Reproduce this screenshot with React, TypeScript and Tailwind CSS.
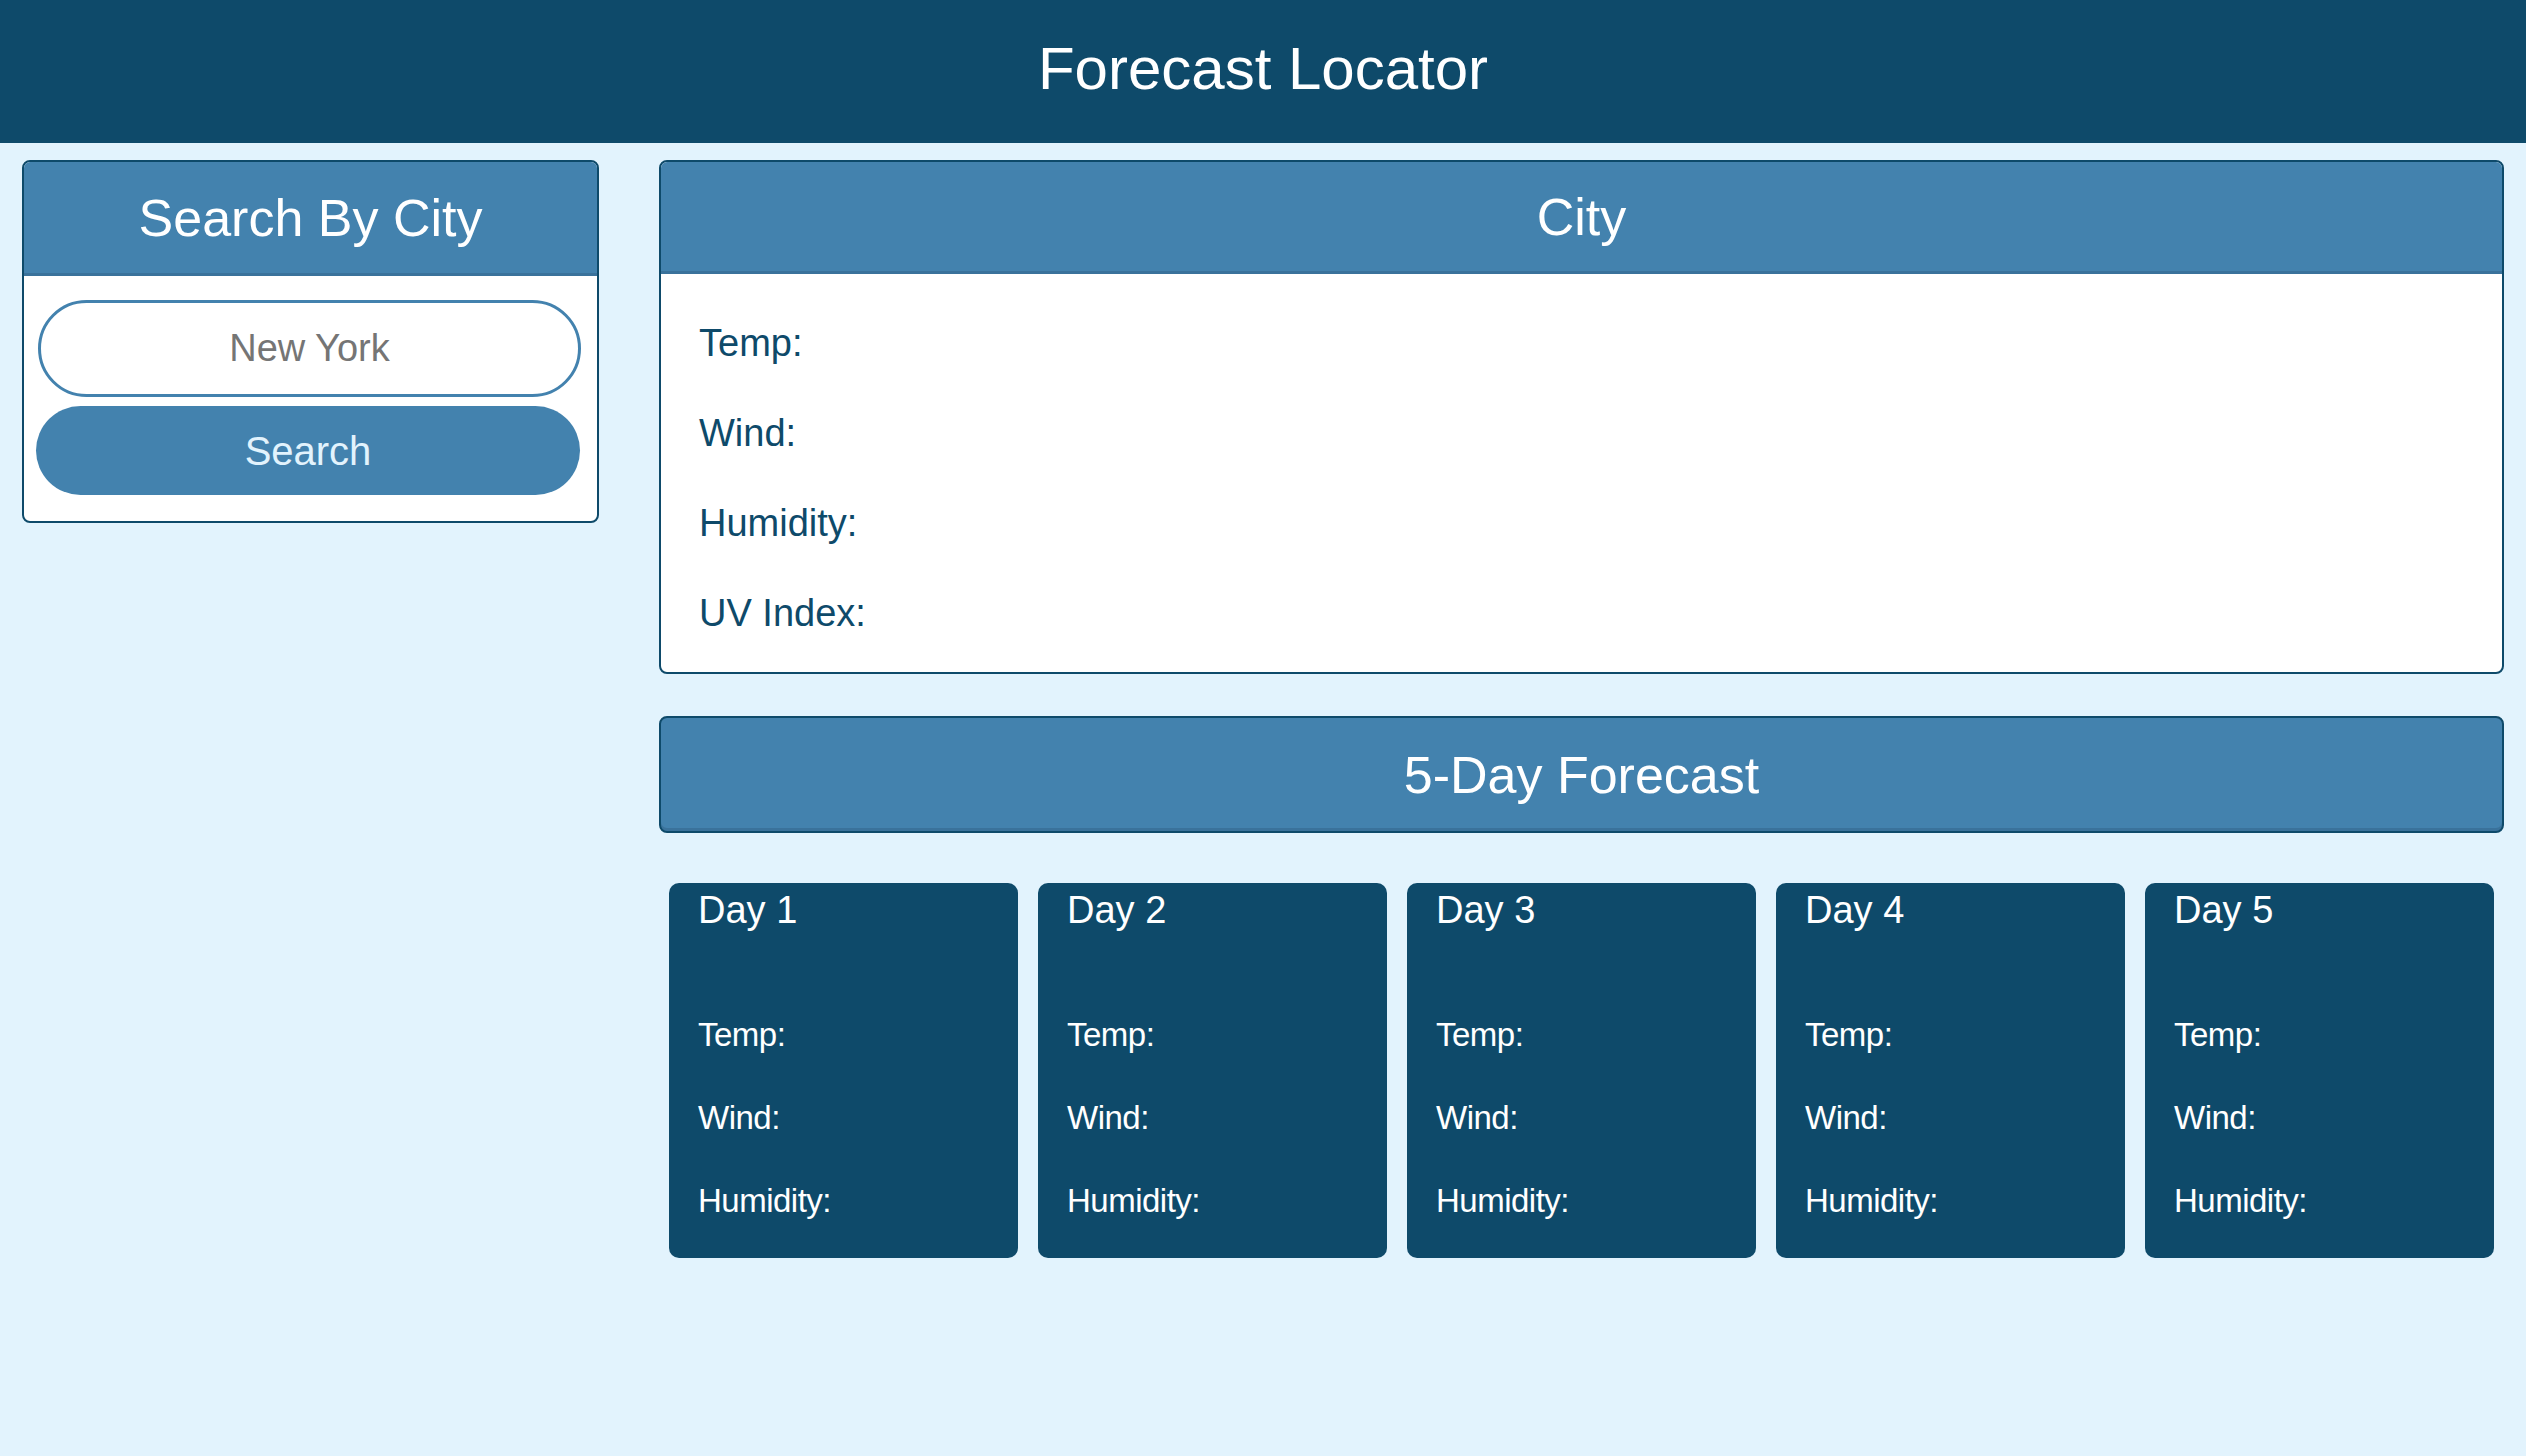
import React from "react";

const days = ["Day 1", "Day 2", "Day 3", "Day 4", "Day 5"];

function DayCard(props: { title: string }) {
  return (
    <div className="flex-1 rounded-[10px] bg-[#0e4a6a] pl-[29px] pt-[5px] pb-[38px] text-white">
      <h3 className="text-[38px] leading-[44px]">{props.title}</h3>
      <div className="mt-[83px] flex flex-col gap-[44px] text-[33px] leading-[39px] tracking-[-0.5px]">
        <p>Temp:</p>
        <p>Wind:</p>
        <p>Humidity:</p>
      </div>
    </div>
  );
}

export default function App() {
  return (
    <div className="min-h-[1456px] bg-[#e2f3fd] font-['Liberation_Sans',Arial,sans-serif]">
      <header className="flex h-[143px] items-center justify-center bg-[#0e4a6a] pb-[6px]">
        <h1 className="text-[60px] leading-none text-white">Forecast Locator</h1>
      </header>

      <div className="flex gap-[60px] px-[22px] pt-[17px]">
        <aside className="w-[577px] shrink-0 self-start overflow-hidden rounded-[8px] border-2 border-[#0e4a6a] bg-white">
          <div className="flex h-[114px] items-center justify-center border-b-[3px] border-[#3a729b] bg-[#4382ae]">
            <h2 className="text-[52px] leading-none text-white">Search By City</h2>
          </div>
          <div className="flex flex-col gap-[9px] pt-[24px] pb-[26px]">
            <input
              type="text"
              placeholder="New York"
              className="ml-[14px] mr-[16px] h-[97px] rounded-full border-[3px] border-[#4382ae] bg-white text-center text-[38px] text-[#757575] placeholder:text-[#757575] outline-none"
            />
            <button className="ml-[12px] mr-[17px] h-[89px] rounded-full bg-[#4382ae] text-[40px] text-[#e2f3fd]">
              Search
            </button>
          </div>
        </aside>

        <main className="flex flex-1 flex-col">
          <section className="overflow-hidden rounded-[8px] border-2 border-[#0e4a6a] bg-white">
            <div className="flex h-[112px] items-center justify-center border-b-[3px] border-[#3a729b] bg-[#4382ae]">
              <h2 className="text-[52px] leading-none text-white">City</h2>
            </div>
            <div className="flex flex-col gap-[46px] pl-[38px] pt-[47px] pb-[37px] text-[38px] leading-[44px] text-[#0e4a6a]">
              <p>Temp:</p>
              <p>Wind:</p>
              <p>Humidity:</p>
              <p>UV Index:</p>
            </div>
          </section>

          <div className="mt-[42px] flex h-[117px] items-center justify-center rounded-[8px] border-2 border-[#0e4a6a] bg-[#4382ae] shadow-[inset_0_-3px_0_#3a729b]">
            <h2 className="text-[52px] leading-none text-white">5-Day Forecast</h2>
          </div>

          <div className="mt-[50px] flex gap-[20px] px-[10px]">
            {days.map((d) => (
              <DayCard key={d} title={d} />
            ))}
          </div>
        </main>
      </div>
    </div>
  );
}
